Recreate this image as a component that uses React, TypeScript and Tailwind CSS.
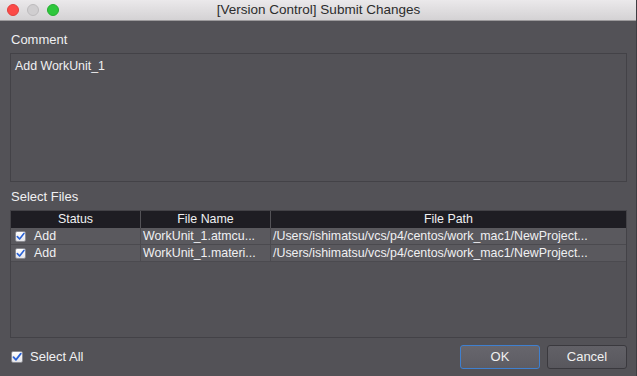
import React from "react";

function Check({ size = 11 }: { size?: number }) {
  return (
    <span
      className="inline-flex items-center justify-center rounded-[2px] bg-gradient-to-b from-[#ffffff] to-[#e4e4e8] border border-[#8a8a90]"
      style={{ width: size, height: size }}
    >
      <svg width={size - 2} height={size - 2} viewBox="0 0 10 10">
        <path d="M1.5 5.2 L4 7.8 L8.8 1.6" fill="none" stroke="#2a62d6" strokeWidth="1.8" strokeLinecap="round" strokeLinejoin="round" />
      </svg>
    </span>
  );
}

const rows = [
  { name: "WorkUnit_1.atmcu...", path: "/Users/ishimatsu/vcs/p4/centos/work_mac1/NewProject..." },
  { name: "WorkUnit_1.materi...", path: "/Users/ishimatsu/vcs/p4/centos/work_mac1/NewProject..." },
];

export default function App() {
  return (
    <div
      className="w-[637px] h-[376px] bg-[#535257] text-[#f0f0f2] flex flex-col overflow-hidden border-r border-[#3e3d42]"
      style={{ fontFamily: '"Liberation Sans", Arial, sans-serif' }}
    >
      {/* title bar */}
      <div className="h-[21px] shrink-0 bg-gradient-to-b from-[#ebe9eb] to-[#d4d2d4] border-b border-[#9c9a9c] flex items-center relative">
        <div className="flex items-center gap-[8px] pl-[7px]">
          <span className="w-[12px] h-[12px] rounded-full bg-[#fc4a47] border border-[#e0403d]" />
          <span className="w-[12px] h-[12px] rounded-full bg-[#d0ced0] border border-[#bdbbbd]" />
          <span className="w-[12px] h-[12px] rounded-full bg-[#2ec73c] border border-[#25ae31]" />
        </div>
        <div className="absolute inset-0 flex items-center justify-center text-[13.5px] text-[#2c2c2c] pl-[1px]">
          [Version Control] Submit Changes
        </div>
      </div>

      <div className="flex flex-col pl-[10px] pr-[9px]">
        <div className="text-[13px] leading-[16px] mt-[11px] pl-[1px]">Comment</div>
        <div className="mt-[5px] h-[129px] shrink-0 border border-[#434247] px-[4px] pt-[5px] text-[12.4px] leading-[15px]">
          Add WorkUnit_1
        </div>
        <div className="text-[13px] leading-[16px] mt-[7px] pl-[1px]">Select Files</div>
        <div className="mt-[5px] h-[128px] shrink-0 border border-[#434247] flex flex-col">
          <div className="grid grid-cols-[130px_130px_1fr] h-[17px] text-[12.4px] leading-[17px] bg-[#535257]">
            <div className="bg-[#1e1d23] text-center mr-[1px]">Status</div>
            <div className="bg-[#1e1d23] text-center mr-[1px]">File Name</div>
            <div className="bg-[#1e1d23] text-center">File Path</div>
          </div>
          {rows.map((r, i) => (
            <div key={i} className="grid grid-cols-[130px_130px_1fr] h-[17px] text-[12.4px] leading-[16px] bg-[#5a595e] border-b border-[#4b4a4f]">
              <div className="flex items-center gap-[8px] pl-[4px] border-r border-[#4b4a4f]">
                <Check size={11} />
                <span>Add</span>
              </div>
              <div className="pl-[2px] border-r border-[#4b4a4f] whitespace-nowrap overflow-hidden">{r.name}</div>
              <div className="pl-[2px] whitespace-nowrap overflow-hidden">{r.path}</div>
            </div>
          ))}
        </div>
        <div className="flex items-center justify-between mt-[7px]">
          <div className="flex items-center gap-[7px] pl-[1px]">
            <Check size={12} />
            <span className="text-[13px]">Select All</span>
          </div>
          <div className="flex items-center gap-[7px]">
            <button className="w-[80px] h-[24px] rounded-[3px] border border-[#3f80d0] bg-gradient-to-b from-[#67666d] to-[#5d5c63] text-[13px] text-[#f0f0f0]">
              OK
            </button>
            <button className="w-[80px] h-[24px] rounded-[3px] border border-[#3a393e] bg-gradient-to-b from-[#626167] to-[#58575d] text-[13px] text-[#f0f0f0]">
              Cancel
            </button>
          </div>
        </div>
      </div>
    </div>
  );
}
